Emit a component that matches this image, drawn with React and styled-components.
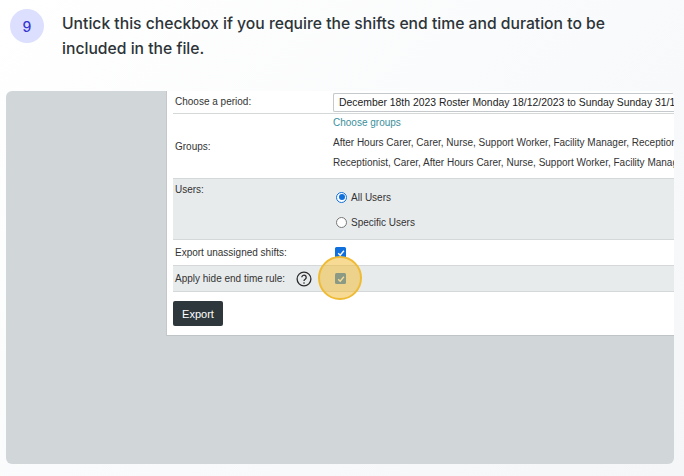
import React from "react";
import styled, { createGlobalStyle } from "styled-components";

const Global = createGlobalStyle`
  html, body { margin: 0; padding: 0; }
  body { width: 684px; height: 476px; overflow: hidden; background: linear-gradient(135deg, #ffffff 0%, #f4f6f8 100%); }
`;
const Page = styled.div`
  width: 684px; height: 476px; box-sizing: border-box; padding: 12px 10px 12px 6px;
  display: flex; flex-direction: column; font-family: "Liberation Sans", Arial, sans-serif;
`;
const Step = styled.div`
  display: flex; gap: 18px; padding-left: 4px; height: 79px; flex: none;
`;
const Badge = styled.div`
  width: 34px; height: 34px; margin-top: -3px; border-radius: 50%; background: #dcdffd; color: #3535d0;
  display: flex; align-items: center; justify-content: center; flex: none;
  font: 500 14px "Inter", sans-serif;
`;
const StepText = styled.p`
  margin: -1px 0 0; width: 570px; font: 500 15.7px/25px "Inter", sans-serif; color: #2d3438;
`;
const Shot = styled.div`
  flex: 1; background: #d1d6d8; border-radius: 6px; padding-left: 160px; overflow: hidden;
`;
const Panel = styled.div`
  height: 245px; box-sizing: border-box; background: #fff; border-left: 1px solid #c4c8ca; border-bottom: 1px solid #bfc4c6;
  padding: 0 0 0 6px; overflow: hidden; font-size: 10px; color: #333;
`;
const Row = styled.div`
  display: grid; grid-template-columns: 158px 1fr; height: ${p => p.$h}px; box-sizing: border-box;
  background: ${p => p.$shaded ? "#e8ebec" : "#fff"};
  border-bottom: 1px solid #d5d8d9; padding-left: 2px; white-space: nowrap;
  align-items: ${p => p.$top ? "start" : "center"};
`;
const Label = styled.div` display: flex; align-items: center; gap: 11px; padding-top: ${p => p.$pt || 0}px; padding-bottom: ${p => p.$pb || 0}px; `;
const Value = styled.div` overflow: hidden; min-width: 0; `;
const Select = styled.div`
  height: 19px; box-sizing: border-box; border: 1px solid #c6c9cb; border-right: 0; border-radius: 2px 0 0 2px;
  padding-left: 5px; line-height: 18px; color: #222; font-size: 10.4px; overflow: hidden;
`;
const GroupList = styled.div` display: flex; flex-direction: column; gap: 8px; padding-bottom: 6px; line-height: 12px; color: #333; font-size: 10px; `;
const Link = styled.a` color: #3b8f9c; `;
const Radios = styled.div` display: flex; flex-direction: column; gap: 13px; padding: 12px 0 0 3px; `;
const RadioRow = styled.label` display: flex; align-items: center; gap: 4px; height: 12px; `;
const Radio = styled.span`
  width: 11px; height: 11px; box-sizing: border-box; border-radius: 50%; flex: none; background: #fff;
  border: ${p => p.$on ? "1.5px solid #0f6fdc" : "1px solid #777"};
  display: flex; align-items: center; justify-content: center;
  &::after { content: ""; width: 6px; height: 6px; border-radius: 50%; background: ${p => p.$on ? "#0f6fdc" : "transparent"}; }
`;
const CheckCell = styled.div` position: relative; padding-left: 2px; height: 11px; `;
const Check = styled.span`
  display: flex; width: 11px; height: 11px; border-radius: 1.5px; background: #0f6fdc;
  align-items: center; justify-content: center;
`;
const Spot = styled.span`
  position: absolute; left: -15px; top: -17px; width: 44px; height: 44px; box-sizing: border-box; border-radius: 50%;
  background: rgba(240, 190, 60, 0.55); border: 2px solid #efbb35;
`;
const Help = styled.svg` width: 16px; height: 16px; flex: none; `;
const Footer = styled.div` padding-top: 9px; `;
const Button = styled.button`
  width: 50px; height: 25px; border: 0; border-radius: 2px; background: #2e383c; color: #fff;
  font: 11px "Liberation Sans", Arial, sans-serif; padding: 0;
`;

const Tick = () => (
  <svg width="8" height="8" viewBox="0 0 8 8"><path d="M1.2 4.2 3.2 6.2 6.9 1.8" fill="none" stroke="#fff" strokeWidth="1.4" /></svg>
);

export default function App() {
  return (
    <Page>
      <Global />
      <Step>
        <Badge>9</Badge>
        <StepText>Untick this checkbox if you require the shifts end time and duration to be included in the file.</StepText>
      </Step>
      <Shot>
        <Panel>
          <Row $h={23}>
            <Label $pb={2}>Choose a period:</Label>
            <Value><Select>December 18th 2023 Roster Monday 18/12/2023 to Sunday Sunday 31/12/2023</Select></Value>
          </Row>
          <Row $h={65}>
            <Label>Groups:</Label>
            <Value>
              <GroupList>
                <Link>Choose groups</Link>
                <span>After Hours Carer, Carer, Nurse, Support Worker, Facility Manager, Receptionist</span>
                <span>Receptionist, Carer, After Hours Carer, Nurse, Support Worker, Facility Manager</span>
              </GroupList>
            </Value>
          </Row>
          <Row $h={61} $shaded $top>
            <Label $pt={5}>Users:</Label>
            <Radios>
              <RadioRow><Radio $on />All Users</RadioRow>
              <RadioRow><Radio />Specific Users</RadioRow>
            </Radios>
          </Row>
          <Row $h={26}>
            <Label>Export unassigned shifts:</Label>
            <CheckCell><Check><Tick /></Check></CheckCell>
          </Row>
          <Row $h={26} $shaded>
            <Label>
              Apply hide end time rule:
              <Help viewBox="0 0 16 16">
                <circle cx="8" cy="8" r="6.9" fill="none" stroke="#2b2b2b" strokeWidth="1.3" />
                <path d="M5.8 6.3a2.2 2.2 0 1 1 3.4 1.9c-.8.5-1.2.9-1.2 1.8" fill="none" stroke="#2b2b2b" strokeWidth="1.3" />
                <circle cx="8" cy="12" r=".8" fill="#2b2b2b" />
              </Help>
            </Label>
            <CheckCell><Check><Tick /></Check><Spot /></CheckCell>
          </Row>
          <Footer><Button>Export</Button></Footer>
        </Panel>
      </Shot>
    </Page>
  );
}
